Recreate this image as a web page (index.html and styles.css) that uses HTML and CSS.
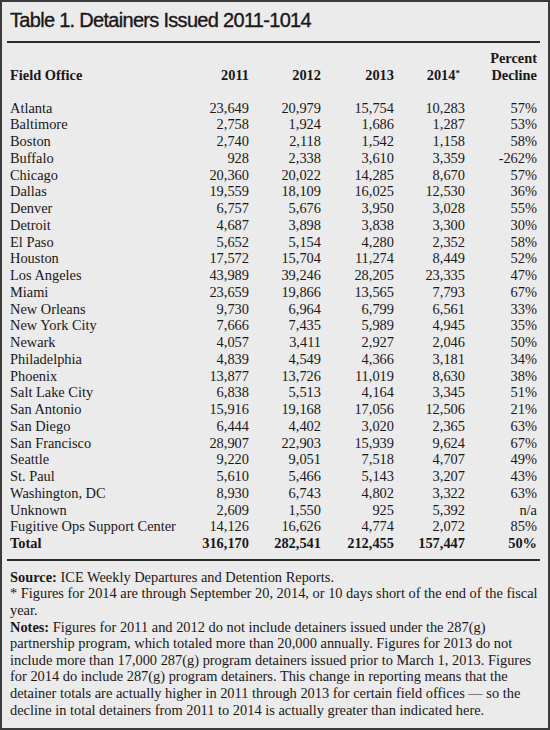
FILE: index.html
```html
<!DOCTYPE html>
<html lang="en">
  <head>
    <meta charset="UTF-8" />
    <meta name="viewport" content="width=device-width, initial-scale=1.0" />
    <title>Table 1. Detainers Issued 2011-1014</title>
    <link rel="stylesheet" href="styles.css">
  </head>
  <body>
    <div class="panel">
      <h1 class="panel-title">Table 1. Detainers Issued 2011-1014</h1>

      <table class="detainers">
        <colgroup>
          <col class="col-office" />
          <col class="col-2011" />
          <col class="col-2012" />
          <col class="col-2013" />
          <col class="col-2014" />
          <col class="col-pct" />
        </colgroup>
        <thead>
          <tr>
            <th class="office">Field Office</th>
            <th>2011</th>
            <th>2012</th>
            <th>2013</th>
            <th class="star">2014<sup>*</sup></th>
            <th>Percent<br />Decline</th>
          </tr>
        </thead>
        <tbody>
          <tr><td class="office">Atlanta</td><td>23,649</td><td>20,979</td><td>15,754</td><td>10,283</td><td>57%</td></tr>
          <tr><td class="office">Baltimore</td><td>2,758</td><td>1,924</td><td>1,686</td><td>1,287</td><td>53%</td></tr>
          <tr><td class="office">Boston</td><td>2,740</td><td>2,118</td><td>1,542</td><td>1,158</td><td>58%</td></tr>
          <tr><td class="office">Buffalo</td><td>928</td><td>2,338</td><td>3,610</td><td>3,359</td><td>-262%</td></tr>
          <tr><td class="office">Chicago</td><td>20,360</td><td>20,022</td><td>14,285</td><td>8,670</td><td>57%</td></tr>
          <tr><td class="office">Dallas</td><td>19,559</td><td>18,109</td><td>16,025</td><td>12,530</td><td>36%</td></tr>
          <tr><td class="office">Denver</td><td>6,757</td><td>5,676</td><td>3,950</td><td>3,028</td><td>55%</td></tr>
          <tr><td class="office">Detroit</td><td>4,687</td><td>3,898</td><td>3,838</td><td>3,300</td><td>30%</td></tr>
          <tr><td class="office">El Paso</td><td>5,652</td><td>5,154</td><td>4,280</td><td>2,352</td><td>58%</td></tr>
          <tr><td class="office">Houston</td><td>17,572</td><td>15,704</td><td>11,274</td><td>8,449</td><td>52%</td></tr>
          <tr><td class="office">Los Angeles</td><td>43,989</td><td>39,246</td><td>28,205</td><td>23,335</td><td>47%</td></tr>
          <tr><td class="office">Miami</td><td>23,659</td><td>19,866</td><td>13,565</td><td>7,793</td><td>67%</td></tr>
          <tr><td class="office">New Orleans</td><td>9,730</td><td>6,964</td><td>6,799</td><td>6,561</td><td>33%</td></tr>
          <tr><td class="office">New York City</td><td>7,666</td><td>7,435</td><td>5,989</td><td>4,945</td><td>35%</td></tr>
          <tr><td class="office">Newark</td><td>4,057</td><td>3,411</td><td>2,927</td><td>2,046</td><td>50%</td></tr>
          <tr><td class="office">Philadelphia</td><td>4,839</td><td>4,549</td><td>4,366</td><td>3,181</td><td>34%</td></tr>
          <tr><td class="office">Phoenix</td><td>13,877</td><td>13,726</td><td>11,019</td><td>8,630</td><td>38%</td></tr>
          <tr><td class="office">Salt Lake City</td><td>6,838</td><td>5,513</td><td>4,164</td><td>3,345</td><td>51%</td></tr>
          <tr><td class="office">San Antonio</td><td>15,916</td><td>19,168</td><td>17,056</td><td>12,506</td><td>21%</td></tr>
          <tr><td class="office">San Diego</td><td>6,444</td><td>4,402</td><td>3,020</td><td>2,365</td><td>63%</td></tr>
          <tr><td class="office">San Francisco</td><td>28,907</td><td>22,903</td><td>15,939</td><td>9,624</td><td>67%</td></tr>
          <tr><td class="office">Seattle</td><td>9,220</td><td>9,051</td><td>7,518</td><td>4,707</td><td>49%</td></tr>
          <tr><td class="office">St. Paul</td><td>5,610</td><td>5,466</td><td>5,143</td><td>3,207</td><td>43%</td></tr>
          <tr><td class="office">Washington, DC</td><td>8,930</td><td>6,743</td><td>4,802</td><td>3,322</td><td>63%</td></tr>
          <tr><td class="office">Unknown</td><td>2,609</td><td>1,550</td><td>925</td><td>5,392</td><td>n/a</td></tr>
          <tr><td class="office">Fugitive Ops Support Center</td><td>14,126</td><td>16,626</td><td>4,774</td><td>2,072</td><td>85%</td></tr>
          <tr class="total"><td class="office">Total</td><td>316,170</td><td>282,541</td><td>212,455</td><td>157,447</td><td>50%</td></tr>
        </tbody>
      </table>

      <div class="notes">
        <p><b>Source:</b> ICE Weekly Departures and Detention Reports.</p>
        <p>* Figures for 2014 are through September 20, 2014, or 10 days short of the end of the fiscal<br />year.</p>
        <p>
          <b>Notes:</b> Figures for 2011 and 2012 do not include detainers issued under the 287(g)<br />
          partnership program, which totaled more than 20,000 annually. Figures for 2013 do not<br />
          include more than 17,000 287(g) program detainers issued prior to March 1, 2013. Figures<br />
          for 2014 do include 287(g) program detainers. This change in reporting means that the<br />
          detainer totals are actually higher in 2011 through 2013 for certain field offices — so the<br />
          decline in total detainers from 2011 to 2014 is actually greater than indicated here.
        </p>
      </div>
    </div>
  </body>
</html>
```

FILE: styles.css
```css
* {
  margin: 0;
  padding: 0;
  box-sizing: border-box;
}

body {
  width: 550px;
  height: 730px;
  background-color: #ffffff;
}

.panel {
  width: 550px;
  height: 730px;
  border: 2px solid #3a3a3a;
  background-color: #ebebeb;
  padding: 5px 8px 0 5px;
  color: #1a1718;
  font-family: "Liberation Serif", "Times New Roman", serif;
}

.panel-title {
  font-family: "Liberation Sans", Arial, sans-serif;
  font-size: 20px;
  font-weight: normal;
  line-height: 24px;
  letter-spacing: -0.7px;
  -webkit-text-stroke: 0.35px #1a1718;
  padding: 1px 0 9px 3px;
  border-bottom: 2px solid #2b2b2b;
}

.detainers {
  width: 533px;
  margin-top: 7px;
  border-collapse: collapse;
  table-layout: fixed;
  font-size: 14.4px;
  line-height: 16.75px;
}

.col-office { width: 178px; }
.col-2011 { width: 67px; }
.col-2012 { width: 72px; }
.col-2013 { width: 73px; }
.col-2014 { width: 71px; }
.col-pct { width: 72px; }

.detainers th,
.detainers td {
  text-align: right;
  padding: 0 3px 0 0;
  white-space: nowrap;
}

.detainers th {
  font-weight: bold;
  vertical-align: bottom;
  padding-bottom: 16px;
}

.detainers .office {
  text-align: left;
  padding-left: 3px;
}

.detainers th.star {
  padding-right: 8px;
}

.detainers sup {
  font-size: 9px;
  line-height: 0;
  vertical-align: 4px;
}

.detainers .total td {
  font-weight: bold;
}

.notes {
  margin-top: 7px;
  border-top: 2px solid #2b2b2b;
  padding: 8px 0 0 3px;
  font-size: 14.4px;
  line-height: 16.6px;
}
```
